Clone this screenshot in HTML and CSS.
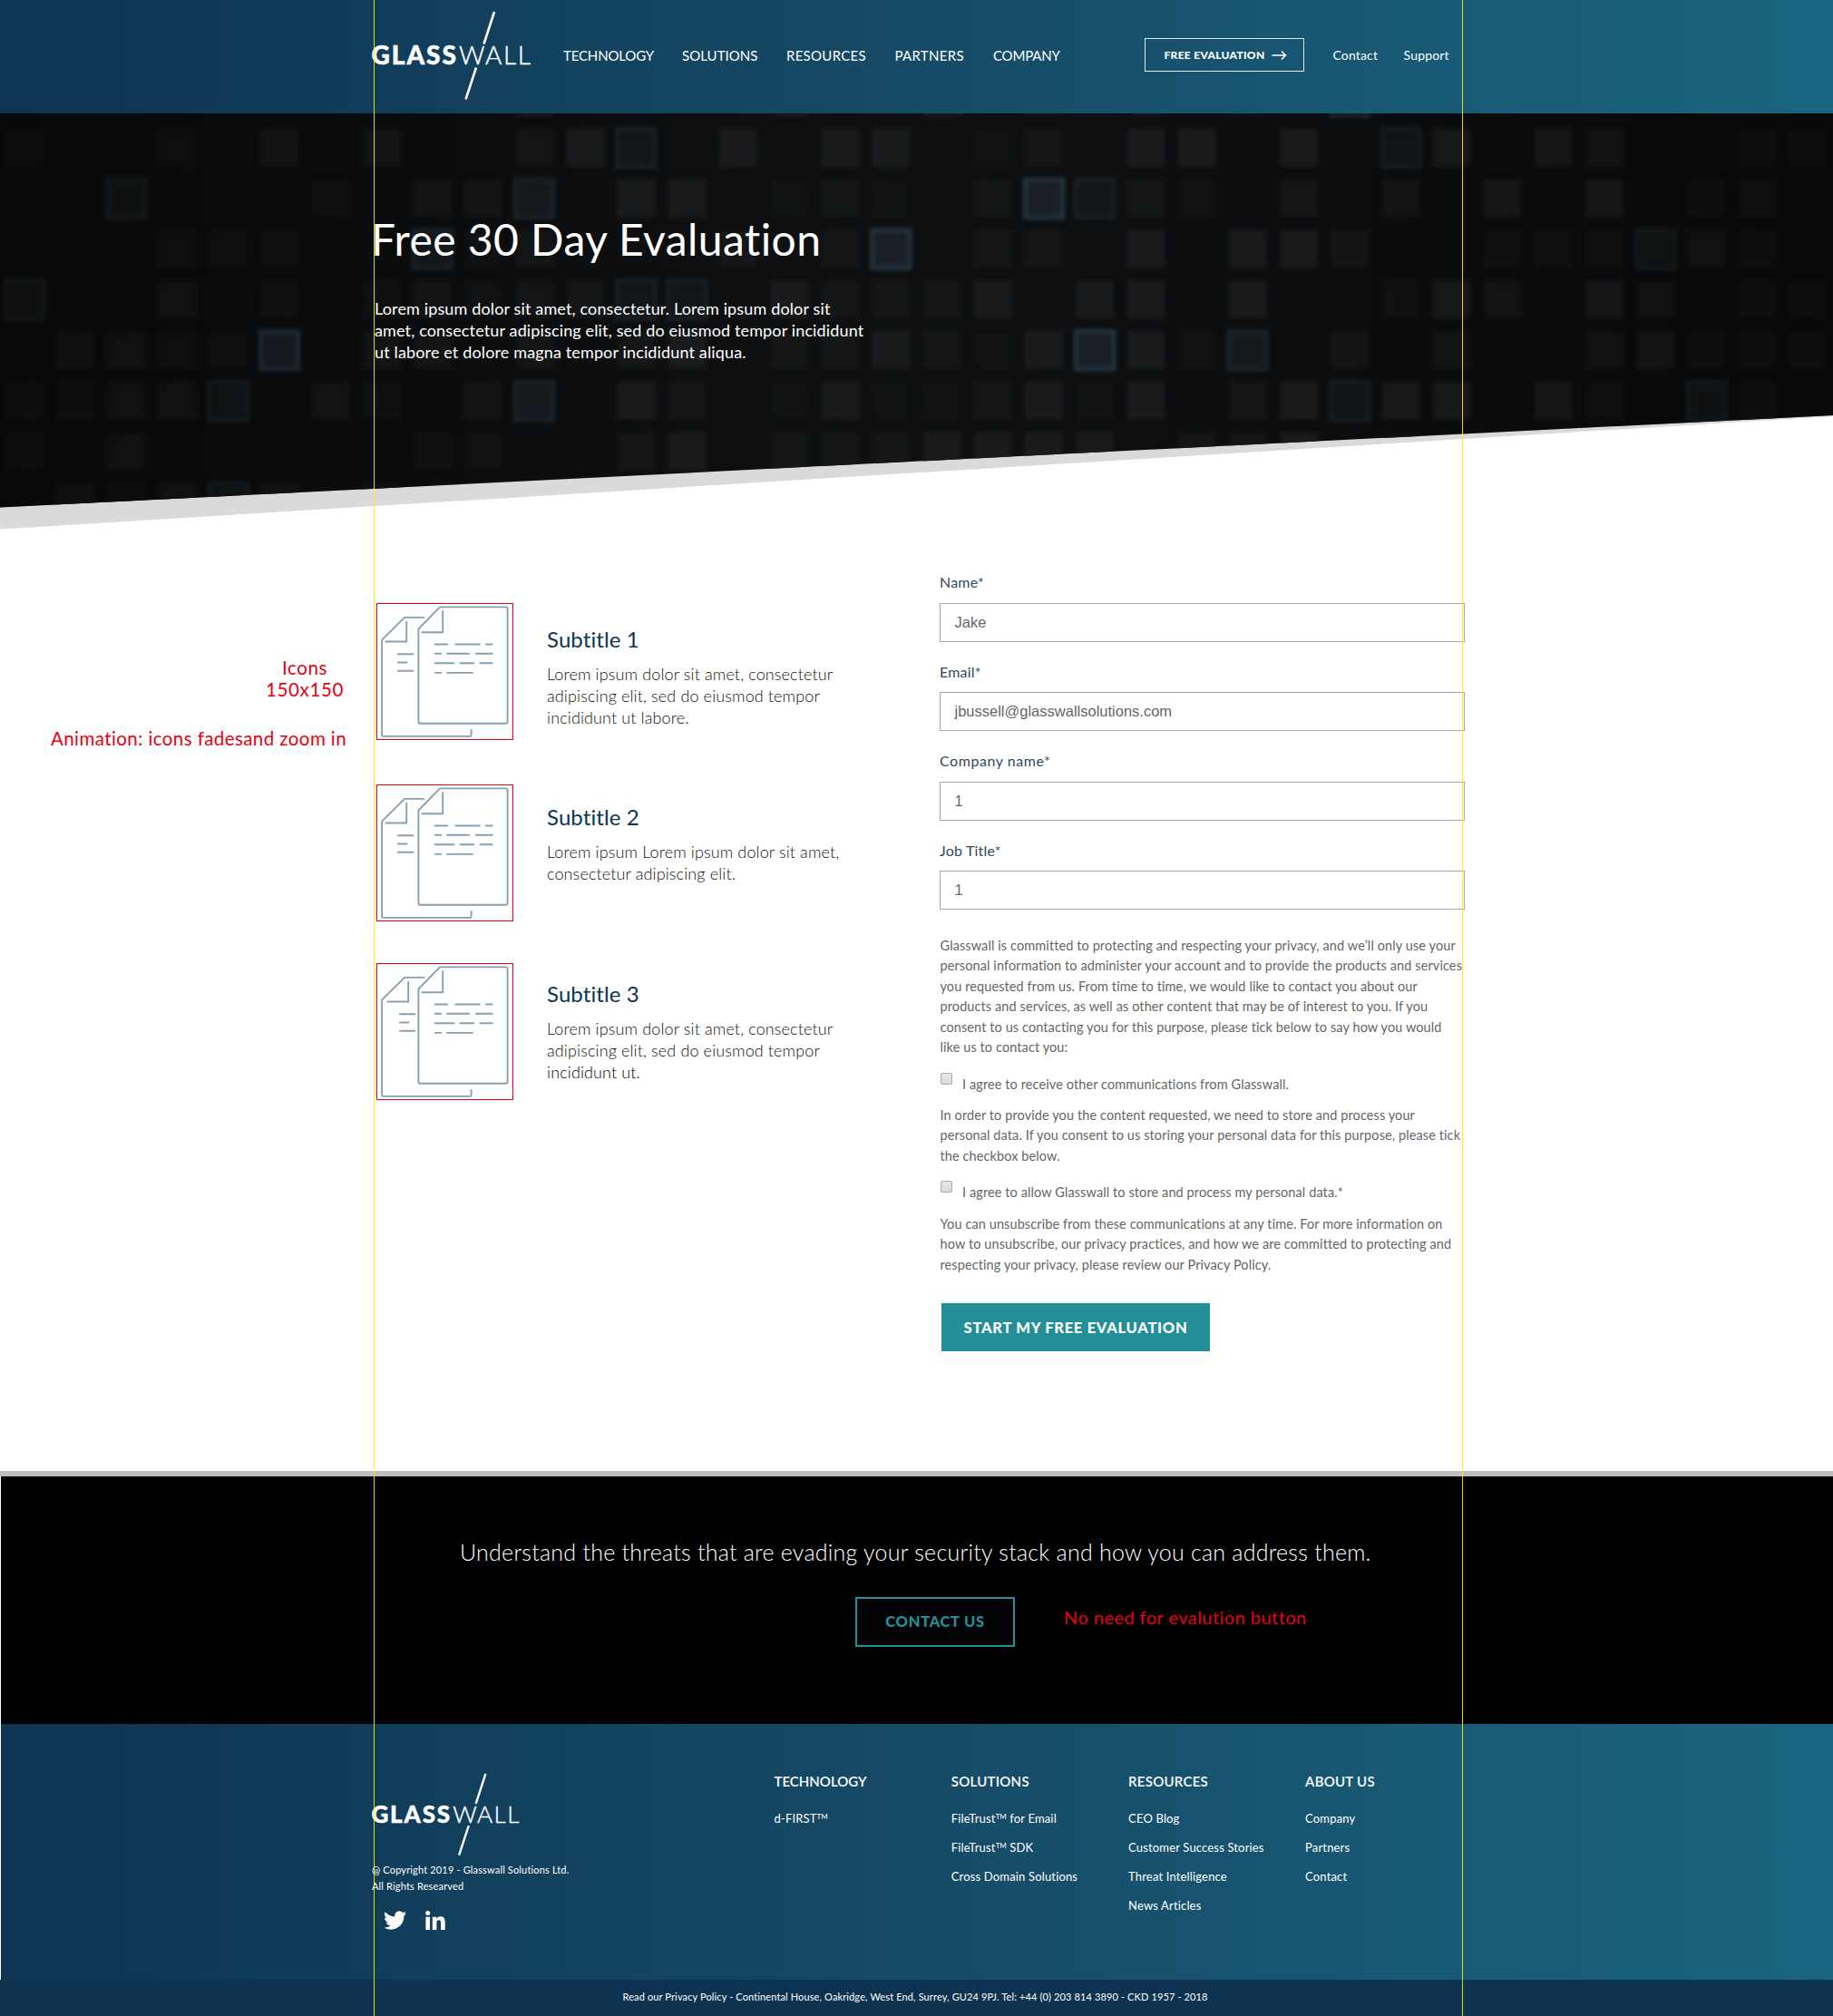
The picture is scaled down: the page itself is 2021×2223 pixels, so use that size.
FILE: index.html
```html
<!DOCTYPE html>
<html lang="en">
<head>
<meta charset="utf-8">
<title>Glasswall - Free 30 Day Evaluation</title>
<link rel="stylesheet" href="styles.css">
</head>
<body>
<svg class="defs" width="0" height="0" aria-hidden="true">
  <symbol id="sheet" viewBox="0 0 149 149">
    <g fill="none" stroke="#86a0b0" stroke-width="1.900" stroke-linecap="round" stroke-linejoin="round">
      <path d="M45.400 27.500 69 3.400H141.600Q143.600 3.400 143.600 5.400V129.800Q143.600 131.800 141.600 131.800H47.400Q45.400 131.800 45.400 129.800Z"/>
      <path d="M72.200 8V31.200H49.500"/>
      <path d="M51.500 14.900H30L5.100 39.700V143.900Q5.100 145.900 7.100 145.900H101.600Q103.600 145.900 103.600 143.900V139"/>
      <path d="M63.800 44.500H77M86.300 44.500H112.800M119.900 44.500H126.700M63.800 54.800H70.300M77 54.800H101M108.800 54.800H126.700M63.800 65.200H84.500M91.300 65.200H106.400M113.500 65.200H126.700M63.800 75.900H70.300M77 75.900H105"/>
    </g>
  </symbol>
  <symbol id="sheet-fold" viewBox="0 0 149 149">
    <path fill="none" stroke="#86a0b0" stroke-width="1.900" stroke-linecap="round" stroke-linejoin="round" d="M32.200 19.800V41.500H9.500M23 55.200H39.500M23 64.500H32.500M23 73.700H39.500"/>
  </symbol>
</svg>

<header class="header">
  <div class="wrap header-row">
    <svg class="logo" width="180" height="102" viewBox="0 0 180 102">
      <path d="M137 3 125.500 38.500M117 64.500 105.500 99.500" stroke="#fff" stroke-width="2.600"/>
      <text class="logo-bold" x="1.500" y="61" textLength="93.500">GLASS</text>
      <text class="logo-thin" x="98" y="61" textLength="79">WALL</text>
    </svg>
    <nav class="nav">
      <a>TECHNOLOGY</a><a>SOLUTIONS</a><a>RESOURCES</a><a>PARTNERS</a><a>COMPANY</a>
    </nav>
    <a class="header-button">FREE EVALUATION
      <svg width="17" height="12" viewBox="0 0 17 12"><path d="M.500 6H15.500M11 1.500 15.500 6 11 10.500" fill="none" stroke="#fff" stroke-width="1.500"/></svg>
    </a>
    <nav class="side-nav"><a>Contact</a><a>Support</a></nav>
  </div>
</header>

<section class="hero">
  <svg class="hero-art" width="2021" height="460" viewBox="0 0 2021 460">
    <defs>
      <linearGradient id="night"><stop offset="0" stop-color="#090a0c"/><stop offset=".5" stop-color="#0e1011"/><stop offset="1" stop-color="#090a0c"/></linearGradient>
      <linearGradient id="dusk"><stop offset="0" stop-color="#060708" stop-opacity=".45"/><stop offset=".35" stop-color="#060708" stop-opacity="0"/><stop offset=".65" stop-color="#060708" stop-opacity="0"/><stop offset="1" stop-color="#060708" stop-opacity=".45"/></linearGradient>
      <filter id="soft" x="-5%" y="-5%" width="110%" height="110%" color-interpolation-filters="sRGB"><feGaussianBlur stdDeviation="2"/></filter>
      <clipPath id="slant"><path d="M0 0H2021V333L0 434.500Z"/></clipPath>
    </defs>
    <path d="M0 400V458.500L2021 334V320Z" fill="#dadada"/>
    <g clip-path="url(#slant)">
      <rect width="2021" height="460" fill="url(#night)"/>
      <g id="mosaic" filter="url(#soft)"></g>
      <rect width="2021" height="460" fill="url(#dusk)"/>
    </g>
  </svg>
  <div class="wrap hero-copy">
    <h1>Free 30 Day Evaluation</h1>
    <p>Lorem ipsum dolor sit amet, consectetur. Lorem ipsum dolor sit<br>amet, consectetur adipiscing elit, sed do eiusmod tempor incididunt<br>ut labore et dolore magna tempor incididunt aliqua.</p>
  </div>
</section>

<main class="wrap main">
  <div class="features">
    <article class="feature">
      <svg class="feature-icon" viewBox="0 0 149 149"><use href="#sheet"/><use href="#sheet-fold"/></svg>
      <div class="feature-text first"><h2>Subtitle 1</h2><p>Lorem ipsum dolor sit amet, consectetur<br>adipiscing elit, sed do eiusmod tempor<br>incididunt ut labore.</p></div>
    </article>
    <article class="feature">
      <svg class="feature-icon" viewBox="0 0 149 149"><use href="#sheet"/><use href="#sheet-fold"/></svg>
      <div class="feature-text second"><h2>Subtitle 2</h2><p>Lorem ipsum Lorem ipsum dolor sit amet,<br>consectetur adipiscing elit.</p></div>
    </article>
    <article class="feature">
      <svg class="feature-icon" viewBox="0 0 149 149"><use href="#sheet"/><use href="#sheet-fold" x="2"/></svg>
      <div class="feature-text third"><h2>Subtitle 3</h2><p>Lorem ipsum dolor sit amet, consectetur<br>adipiscing elit, sed do eiusmod tempor<br><span class="dark">incididunt ut.</span></p></div>
    </article>
  </div>

  <form class="form">
    <div class="field"><label>Name*</label><div class="input">Jake</div></div>
    <div class="field"><label>Email*</label><div class="input">jbussell@glasswallsolutions.com</div></div>
    <div class="field wide"><label>Company name*</label><div class="input">1</div></div>
    <div class="field"><label>Job Title*</label><div class="input">1</div></div>
    <div class="terms">
      <p>Glasswall is committed to protecting and respecting your privacy, and we’ll only use your<br>personal information to administer your account and to provide the products and services<br>you requested from us. From time to time, we would like to contact you about our<br>products and services, as well as other content that may be of interest to you. If you<br>consent to us contacting you for this purpose, please tick below to say how you would<br>like us to contact you:</p>
      <div class="check"><i class="box"></i><span>I agree to receive other communications from Glasswall.</span></div>
      <p>In order to provide you the content requested, we need to store and process your<br>personal data. If you consent to us storing your personal data for this purpose, please tick<br>the checkbox below.</p>
      <div class="check"><i class="box"></i><span>I agree to allow Glasswall to store and process my personal data.*</span></div>
      <p>You can unsubscribe from these communications at any time. For more information on<br>how to unsubscribe, our privacy practices, and how we are committed to protecting and<br>respecting your privacy, please review our Privacy Policy.</p>
    </div>
    <a class="submit">START MY FREE EVALUATION</a>
  </form>
</main>

<section class="cta">
  <p>Understand the threats that are evading your security stack and how you can address them.</p>
  <div class="wrap cta-row"><a class="cta-button">CONTACT US</a><span class="note">No need for evalution button</span></div>
</section>

<footer>
  <div class="footer">
    <div class="wrap footer-row">
      <div class="brand">
        <svg class="brand-logo" width="167.400" height="95" viewBox="0 0 180 102">
          <path d="M137 3 125.500 38.500M117 64.500 105.500 99.500" stroke="#fff" stroke-width="2.600"/>
          <text class="logo-bold" x="1.500" y="61" textLength="93.500">GLASS</text>
          <text class="logo-thin" x="98" y="61" textLength="79">WALL</text>
        </svg>
        <p>@ Copyright 2019 - Glasswall Solutions Ltd.<br>All Rights Researved</p>
        <div class="social">
          <svg width="25" height="21" viewBox="0 0 24 19.500"><path fill="#fff" d="M24 2.309a9.800 9.800 0 0 1-2.828.775A4.932 4.932 0 0 0 23.337.360a9.864 9.864 0 0 1-3.127 1.195A4.920 4.920 0 0 0 11.710 4.900c0 .386.044.762.128 1.122C7.728 5.816 4.100 3.850 1.671.901a4.930 4.930 0 0 0 1.523 6.574 4.903 4.903 0 0 1-2.229-.616v.061a4.926 4.926 0 0 0 3.950 4.827 4.996 4.996 0 0 1-2.224.084 4.937 4.937 0 0 0 4.600 3.419A9.900 9.900 0 0 1 0 17.290a13.940 13.940 0 0 0 7.548 2.212c9.142 0 14.307-7.721 13.995-14.646A10.025 10.025 0 0 0 24 2.309z"/></svg>
          <svg width="22" height="21" viewBox="0 0 22 21"><path fill="#fff" d="M.400 6.700H5V21H.400ZM2.700 0A2.500 2.500 0 1 1 2.700 5 2.500 2.500 0 0 1 2.700 0ZM7.800 6.700H12.200V8.700C13 7.300 14.500 6.300 16.700 6.300 20.800 6.300 21.700 9 21.700 12.800V21H17.100V13.700C17.100 11.900 17 10.200 14.900 10.200 12.800 10.200 12.400 11.700 12.400 13.600V21H7.800Z"/></svg>
        </div>
      </div>
      <div class="links"><h3>TECHNOLOGY</h3><a>d-FIRST<sup>TM</sup></a></div>
      <div class="links"><h3>SOLUTIONS</h3><a>FileTrust<sup>TM</sup> for Email</a><a>FileTrust<sup>TM</sup> SDK</a><a>Cross Domain Solutions</a></div>
      <div class="links"><h3>RESOURCES</h3><a>CEO Blog</a><a>Customer Success Stories</a><a>Threat Intelligence</a><a>News Articles</a></div>
      <div class="links"><h3>ABOUT US</h3><a>Company</a><a>Partners</a><a>Contact</a></div>
    </div>
  </div>
  <p class="legal">Read our Privacy Policy - Continental House, Oakridge, West End, Surrey, GU24 9PJ. Tel: +44 (0) 203 814 3890 - CKD 1957 - 2018</p>
</footer>

<div class="note note-icons">Icons<br>150x150</div>
<div class="note note-animation">Animation: icons fadesand zoom in</div>
<div class="guide guide-left"></div>
<div class="guide guide-right"></div>
<script src="mosaic.js"></script>
</body>
</html>
```
FILE: styles.css
```css
* { box-sizing: border-box; }
body {
  margin: 0;
  width: 2021px;
  height: 2223px;
  position: relative;
  overflow: hidden;
  background: #fff;
  font-family: Lato, "Open Sans", sans-serif;
  white-space: nowrap;
  font-variant-ligatures: none;
}
h1, h2, h3, p { margin: 0; font-weight: 400; }
.defs { position: absolute; }
.wrap { width: 1203px; margin: 0 0 0 412px; }
.logo-bold, .logo-thin { font-family: Lato, sans-serif; font-size: 28px; fill: #fff; }
.logo-bold { font-weight: 900; stroke: #fff; stroke-width: .5px; }
.logo-thin { font-weight: 300; stroke: #fff; stroke-width: .4px; }

/* Header */
.header {
  height: 125px;
  padding-bottom: 4px;
  background: linear-gradient(90deg, #0d3453, #154864 45%, #185873 75%, #19657f);
  color: #fff;
}
.header-row { height: 121px; display: flex; align-items: center; }
.logo { flex: none; margin-left: -4px; }
.nav {
  margin-left: 33px;
  display: grid;
  grid-template-columns: 131px 115px 119.500px 108.500px 166.500px;
  font-size: 15px;
  letter-spacing: .04px;
}
.nav a:first-child { letter-spacing: -.15px; }
.nav a:nth-child(3) { letter-spacing: .28px; }
.nav a:nth-child(4) { letter-spacing: .3px; }
.nav a:nth-child(5) { letter-spacing: -.2px; }
.header-button {
  flex: none;
  width: 176px;
  height: 37px;
  border: 1.5px solid #e3eaee;
  display: flex;
  align-items: center;
  padding-left: 21px;
  gap: 8px;
  font-size: 12px;
  font-weight: 900;
  letter-spacing: .3px;
}
.side-nav { display: flex; gap: 28.500px; margin-left: 32px; font-size: 14px; letter-spacing: .15px; }

/* Hero */
.hero { position: relative; height: 460px; color: #fff; }
.hero-art { position: absolute; left: 0; top: 0; }
.hero-copy { position: relative; padding-top: 108.500px; }
.hero h1 { margin-left: -3px; font-size: 48px; line-height: 60px; letter-spacing: .45px; }
.hero p { margin: 34.500px 0 0 1px; font-size: 18px; line-height: 24px; letter-spacing: .14px; }

/* Features */
.main { height: 1037px; display: flex; align-items: flex-start; }
.features { flex: none; width: 624px; padding: 80px 0 0 3px; }
.feature { display: flex; gap: 37px; height: 151px; margin-bottom: 49px; }
.feature + .feature { margin-bottom: 46px; }
.feature-icon { flex: none; width: 151px; height: 151px; border: 1px solid #e60012; }
.first { padding-top: 25px; }
.second { padding-top: 20.500px; }
.third { padding-top: 19px; }
.feature h2 { font-size: 24px; line-height: 29px; letter-spacing: .1px; color: #0d3453; }
.feature p { margin-top: 12px; font-size: 18px; line-height: 24px; font-weight: 300; letter-spacing: .12px; color: #111; }
.dark { color: #000; }

/* Form */
.form { flex: none; width: 579px; padding-top: 47px; }
.field { height: 98.500px; }
.field label { display: block; font-size: 16px; line-height: 20px; letter-spacing: .2px; color: #33475b; }
.field.wide label { letter-spacing: .55px; }
.input {
  margin-top: 12.500px;
  height: 43px;
  padding-left: 15.500px;
  border: 1.5px solid #a6a6a6;
  font: 16.500px/40px "Liberation Sans", Arial, sans-serif;
  color: #666;
}
.terms { padding: 5.500px 0 0 .5px; font-size: 14.500px; line-height: 22.500px; letter-spacing: .1px; color: #666; }
.check { display: flex; margin: 18px 0 11.800px; }
.box { width: 13px; height: 13px; margin: -2px 11.500px 0 0; border: 1px solid #aaa; border-radius: 2px; background: linear-gradient(#e8e8e8, #dadada); }
.submit {
  display: block;
  margin: 30.500px 0 0 2px;
  width: 296px;
  height: 53.500px;
  background: #248f98;
  color: #fff;
  font-size: 16.500px;
  font-weight: 900;
  line-height: 54px;
  letter-spacing: .72px;
  text-align: center;
}

/* Call to action */
.cta { height: 279px; padding-top: 68px; border-top: 6px solid #bdbdbd; background: linear-gradient(90deg, #fff 1px, #000 1px); }
.cta p { color: #fff; font-size: 25px; font-weight: 300; line-height: 30px; letter-spacing: .245px; margin-left: 507px; }
.cta-row { margin-top: 34.500px; display: flex; align-items: center; }
.cta-button {
  margin-left: 531px;
  width: 176px;
  height: 55px;
  border: 2px solid #248f98;
  background: #030305;
  color: #248f98;
  font-size: 16.500px;
  font-weight: 900;
  line-height: 51px;
  letter-spacing: .7px;
  text-align: center;
}
.note { color: #e60012; font-size: 20.500px; line-height: 24px; letter-spacing: .42px; }
.cta .note { margin: -11px 0 0 54px; font-size: 20px; letter-spacing: .45px; }

/* Footer */
.footer { height: 282px; color: #fff; background: linear-gradient(90deg, #fff 1px, transparent 1px), linear-gradient(90deg, #0d3453, #154864 45%, #185873 75%, #19657f); }
.footer-row { display: grid; grid-template-columns: 441.500px 195.300px 195.300px 195px auto; padding-top: 51.500px; }
.brand { margin-left: -2px; font-size: 11px; line-height: 18px; letter-spacing: .16px; }
.brand-logo { display: block; margin: 0 0 5.500px -2.500px; }
.social { display: flex; gap: 21px; margin: 18px 0 0 12.500px; }
.links h3 { margin: 2px 0 16.500px; font-size: 15px; font-weight: 600; line-height: 18px; letter-spacing: .25px; }
.links:nth-child(2) h3 { letter-spacing: 0; }
.links a { display: block; font-size: 13px; line-height: 32px; letter-spacing: .16px; }
.links sup { font-size: 8px; line-height: 0; vertical-align: 4px; letter-spacing: 0; }
.legal { height: 40px; padding-left: 686.500px; background: #0d3350; color: #fff; font-size: 11px; line-height: 38px; letter-spacing: .125px; }

/* Review overlay */
.note-icons { position: absolute; left: 292px; top: 724px; width: 88px; text-align: center; letter-spacing: .65px; }
.note-animation { position: absolute; left: 56px; top: 802px; }
.guide { position: absolute; top: 0; width: 1px; height: 2223px; background: rgba(255, 240, 0, .88); }
.guide-left { left: 412px; }
.guide-right { left: 1612px; }
```
FILE: mosaic.js
```js
// Tile brightness per grid cell: a-c plain tiles, o/B/S tiles with a lit edge.
const rows = [
  '..........c....c..c.b.b.b.B.........',
  'a..a.b.b..bco.c.cc.ab.cc.c.oc.cb..aa',
  '..o...a.bbB.cc.aba.bSoba.b.b.c.c.ab.',
  '...aaa..Bab...b.bS.bb.c.ccb..aaaoba.',
  'o..b.a.ababboo.cbbbc.cc.c..acb.cb.aa',
  '.bbaaS.bb.b.bc.bbcbacScaB.b.b..bcaaa',
  'aabbo.ba.bB.cb.acaabcac.bcocc.ca.oa.',
  'a.b.....aa..bc.bbbcccc.bbc.a........',
  '.babob.a............................'
];
const look = {
  a: ['#101213', 'none'],
  b: ['#141617', 'none'],
  c: ['#191b1d', 'none'],
  o: ['#131618', '#1e2225'],
  B: ['#161a1e', '#1b2831'],
  S: ['#1a2025', '#253846']
};
const mosaic = document.getElementById('mosaic');
rows.forEach((row, r) => [...row].forEach((kind, c) => {
  if (!look[kind]) return;
  const tile = document.createElementNS('http://www.w3.org/2000/svg', 'rect');
  tile.setAttribute('x', 6 + 56.2 * c);
  tile.setAttribute('y', 17 + 55.8 * (r - 1));
  tile.setAttribute('width', 42);
  tile.setAttribute('height', 42);
  tile.setAttribute('fill', look[kind][0]);
  tile.setAttribute('stroke', look[kind][1]);
  tile.setAttribute('stroke-width', 4);
  mosaic.append(tile);
}));
```
